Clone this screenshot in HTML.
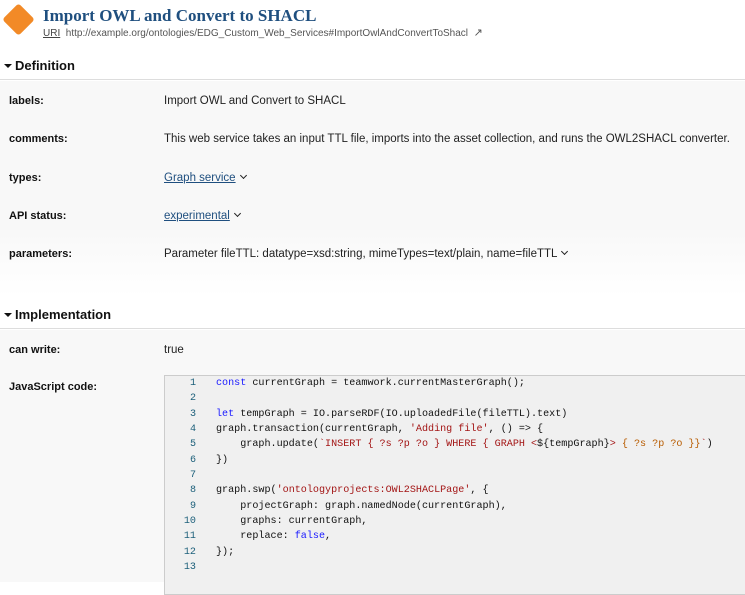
<!DOCTYPE html>
<html><head><meta charset="utf-8"><style>
*{margin:0;padding:0;box-sizing:border-box}
body{width:745px;height:582px;overflow:hidden;background:#fff;font-family:"Liberation Sans",sans-serif;color:#222;font-size:11px;position:relative}
.abs{position:absolute;white-space:nowrap}
.title{left:43px;top:6px;font-family:"Liberation Serif",serif;font-weight:bold;font-size:17px;color:#1f4f7f}
.uri{left:43px;top:26px;font-size:10px;color:#555}
.uri u{color:#444}
.diamond{left:7px;top:8px;width:23px;height:23px;background:#f28a27;transform:rotate(45deg);border-radius:3px}
.head{left:0;width:745px;height:28px;border-bottom:1px solid #ddd;background:#fff}
.head span{position:absolute;left:15px;top:6px;font-size:13px;font-weight:bold;color:#111}
.head i{position:absolute;left:4px;top:12px;border-left:4px solid transparent;border-right:4px solid transparent;border-top:4px solid #111}
.sec{left:0;width:745px;background:linear-gradient(#f8f8f8 70%,#fff)}
.lbl{left:9px;font-weight:bold;font-size:11px;color:#111}
.val{left:164px;font-size:11.5px;color:#222}
.val a{color:#1f4f7f;text-decoration:underline}
.chev{display:inline-block;width:5px;height:5px;border-right:1.3px solid #222;border-bottom:1.3px solid #222;transform:rotate(45deg);margin-left:5px;position:relative;top:-3px}
.code{left:164px;top:375px;width:590px;height:220px;background:#f0f0f0;border:1px solid #ccc;font-family:"Liberation Mono",monospace;font-size:10.1px}
.ln{position:absolute;left:0;width:31px;text-align:right;color:#1c5f7a}
.cl{position:absolute;left:51px;white-space:pre;color:#111}
.k{color:#1a1aff}.s{color:#a31515}.v{color:#b85c00}
</style></head><body>
<div class="abs diamond"></div>
<div class="abs title">Import OWL and Convert to SHACL</div>
<div class="abs uri"><u>URI</u> &nbsp;http://example.org/ontologies/EDG_Custom_Web_Services#ImportOwlAndConvertToShacl &nbsp;<span style="font-size:11px">&#x2197;</span></div>

<div class="abs head" style="top:52px"><i></i><span>Definition</span></div>
<div class="abs sec" style="top:81px;height:215px"></div>
<div class="abs lbl" style="top:95px">labels:</div><div class="abs val" style="top:95px">Import OWL and Convert to SHACL</div>
<div class="abs lbl" style="top:133px">comments:</div><div class="abs val" style="top:133px">This web service takes an input TTL file, imports into the asset collection, and runs the OWL2SHACL converter.</div>
<div class="abs lbl" style="top:172px">types:</div><div class="abs val" style="top:172px"><a>Graph service</a><span class="chev"></span></div>
<div class="abs lbl" style="top:210px">API status:</div><div class="abs val" style="top:210px"><a>experimental</a><span class="chev"></span></div>
<div class="abs lbl" style="top:248px">parameters:</div><div class="abs val" style="top:248px">Parameter fileTTL: datatype=xsd:string, mimeTypes=text/plain, name=fileTTL<span class="chev"></span></div>

<div class="abs head" style="top:301px"><i></i><span>Implementation</span></div>
<div class="abs sec" style="top:330px;height:252px;background:#f8f8f8"></div>
<div class="abs lbl" style="top:344px">can write:</div><div class="abs val" style="top:344px">true</div>
<div class="abs lbl" style="top:381px">JavaScript code:</div>
<div class="abs code">
<div class="ln" style="top:2px">1</div><div class="cl" style="top:2px"><span class="k">const</span> currentGraph = teamwork.currentMasterGraph();</div>
<div class="ln" style="top:17px">2</div>
<div class="ln" style="top:33px">3</div><div class="cl" style="top:33px"><span class="k">let</span> tempGraph = IO.parseRDF(IO.uploadedFile(fileTTL).text)</div>
<div class="ln" style="top:48px">4</div><div class="cl" style="top:48px">graph.transaction(currentGraph, <span class="s">'Adding file'</span>, () =&gt; {</div>
<div class="ln" style="top:63px">5</div><div class="cl" style="top:63px">    graph.update(<span class="s">`INSERT { ?s ?p ?o } WHERE { GRAPH &lt;</span>${tempGraph}<span class="s">&gt; </span><span class="v">{ ?s ?p ?o }}</span><span class="s">`</span>)</div>
<div class="ln" style="top:79px">6</div><div class="cl" style="top:79px">})</div>
<div class="ln" style="top:94px">7</div>
<div class="ln" style="top:109px">8</div><div class="cl" style="top:109px">graph.swp(<span class="s">'ontologyprojects:OWL2SHACLPage'</span>, {</div>
<div class="ln" style="top:125px">9</div><div class="cl" style="top:125px">    projectGraph: graph.namedNode(currentGraph),</div>
<div class="ln" style="top:140px">10</div><div class="cl" style="top:140px">    graphs: currentGraph,</div>
<div class="ln" style="top:155px">11</div><div class="cl" style="top:155px">    replace: <span class="k">false</span>,</div>
<div class="ln" style="top:171px">12</div><div class="cl" style="top:171px">});</div>
<div class="ln" style="top:186px">13</div>
</div>
</body></html>
